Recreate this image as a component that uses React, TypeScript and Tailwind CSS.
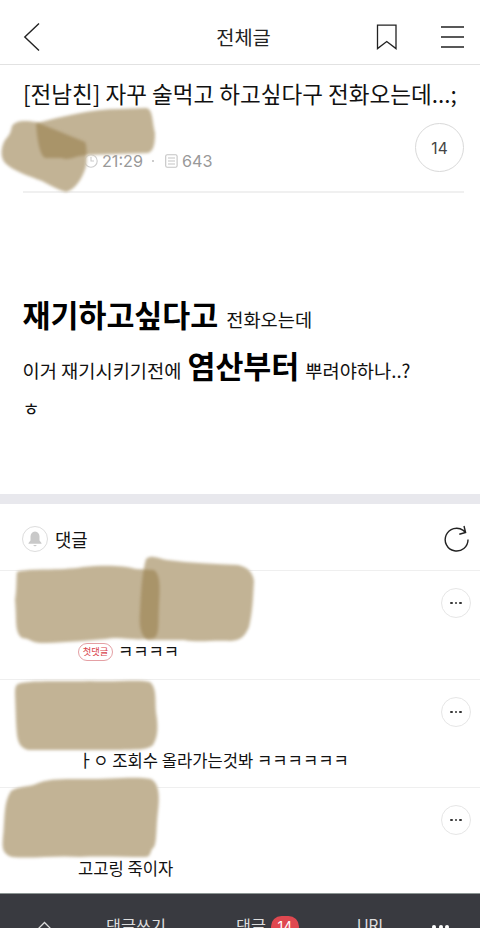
import React from 'react';

const MoreButton = () => (
  <button className="flex h-[30px] w-[30px] items-center justify-center gap-[2px] rounded-full border border-[#e6e6e6]">
    <span className="h-[2.5px] w-[2.5px] rounded-full bg-[#333]" />
    <span className="h-[2.5px] w-[2.5px] rounded-full bg-[#333]" />
    <span className="h-[2.5px] w-[2.5px] rounded-full bg-[#333]" />
  </button>
);

function Comment({ children, height }: { children: React.ReactNode; height: string }) {
  return (
    <li className={`flex flex-col border-t border-[#efefef] ${height}`}>
      <div className="flex h-[61px] justify-end pt-[17px] pr-[9px]">
        <MoreButton />
      </div>
      <div className="flex h-[38px] items-center pl-[78px] text-[16.6px] whitespace-pre text-[#111]">{children}</div>
    </li>
  );
}

const marks = [
  'M37 123 C60 117 92 109 120 109 L146 108 C153 109 152 120 155 133 C155 143 154 151 148 153 L86 155 C75 156 68 161 62 158 L45 158 C39 154 37 136 36 124 Z',
  'M12 126 C17 119 28 121 36 122 L85 142 C87 145 87 159 86 166 C83 178 75 190 66 192 C58 190 50 185 42 181 C29 176 15 172 5 163 C0 157 1 147 5 140 C11 134 11 130 12 126 Z',
  'M17 572 C28 568 60 571 83 567 C102 565 123 565 136 569 L154 570 C161 575 160 590 159 606 C158 622 160 635 154 638 C132 642 122 636 106 639 C82 641 56 643 40 643 C30 642 31 639 22 638 C14 632 17 620 15 600 C17 588 16 578 17 572 Z',
  'M146 559 C152 554 159 559 167 560 C191 563 215 564 238 565 C248 567 253 573 254 581 C253 596 253 610 249 627 C244 638 240 640 231 641 C207 640 200 643 184 640 L148 640 C140 636 139 624 140 612 C141 592 142 573 146 559 Z',
  'M18 684 C28 680 60 682 90 681 C120 682 139 679 150 682 C157 688 155 700 156 712 C159 730 157 738 153 745 C146 751 133 749 120 750 L28 750 C17 747 17 737 16 722 L15 693 C15 687 16 685 18 684 Z',
  'M11 791 C18 786 29 787 36 784 C49 778 67 779 85 779 C111 779 137 776 151 779 C159 783 160 796 158 811 C156 826 157 842 154 847 C149 851 152 857 145 857 C121 857 102 856 80 857 C55 855 33 859 12 857 C2 854 2 847 3 837 C5 820 3 803 11 791 Z',
];

const BrushMarks = () => (
  <svg className="pointer-events-none absolute top-0 left-0" width="480" height="928" viewBox="0 0 480 928">
    <defs>
      <filter id="soft" x="-10%" y="-10%" width="120%" height="120%" colorInterpolationFilters="sRGB">
        <feGaussianBlur stdDeviation="1.4" />
      </filter>
    </defs>
    {marks.map((d) => (
      <path key={'base' + d} d={d} fill="#fff" filter="url(#soft)" />
    ))}
    {marks.map((d) => (
      <path key={d} d={d} fill="rgb(151,126,75)" fillOpacity="0.59" filter="url(#soft)" />
    ))}
  </svg>
);

export default function App() {
  return (
    <div className="relative flex h-[928px] w-[480px] flex-col overflow-hidden bg-white font-['Noto_Sans_CJK_KR',sans-serif] text-[#111]">
      <header className="grid h-[65px] shrink-0 grid-cols-[1fr_auto_1fr] items-center border-b border-[#e2e2e2] pt-[9px] pr-[16px] pl-[23px]">
        <svg width="18" height="28" viewBox="0 0 18 28" fill="none" stroke="#222" strokeWidth="1.4">
          <path d="M16 0.5L1.8 14L16 27.5" />
        </svg>
        <h1 className="text-[19.8px] leading-7 font-normal text-[#222]">전체글</h1>
        <div className="flex items-center justify-end gap-[43px]">
          <svg width="22" height="26" viewBox="0 0 22 26" fill="none" stroke="#222" strokeWidth="1.3">
            <path d="M1.5 1.2H20V24.6L10.75 17.6L1.5 24.6Z" />
          </svg>
          <svg width="23" height="22" viewBox="0 0 23 22" stroke="#222" strokeWidth="1.3">
            <path d="M0 1H23M0 11H23M0 21H23" />
          </svg>
        </div>
      </header>

      <section className="mr-[16px] ml-[23px] flex h-[128px] shrink-0 flex-col border-b-2 border-[#f0f0f0]">
        <h2 className="flex h-[58px] items-center text-[22.55px] font-normal whitespace-nowrap">
          [전남친] 자꾸 술먹고 하고싶다구 전화오는데...;
        </h2>
        <div className="flex justify-between">
          <div className="mt-[28px] flex h-[20px] items-center pl-[61px] font-[Inter,sans-serif] text-[16.2px] text-[#999]">
            <svg width="14" height="14" viewBox="0 0 14 14" fill="none" stroke="#ccc" strokeWidth="1.1">
              <circle cx="7" cy="7" r="6.2" />
              <path d="M7 3V7H10" />
            </svg>
            <span className="ml-[4px]">21:29</span>
            <span className="ml-[9px] h-[2px] w-[2px] rounded-full bg-[#bbb]" />
            <svg className="ml-[11px]" width="13" height="14" viewBox="0 0 13 14" fill="none" stroke="#c4c4c4" strokeWidth="1.1">
              <rect x="0.7" y="0.7" width="11.4" height="12.6" rx="1.5" />
              <path d="M3 4H10M3 7H10M3 10H10" />
            </svg>
            <span className="ml-[4px]">643</span>
          </div>
          <div className="flex h-[49px] w-[49px] items-center justify-center rounded-full border border-[#d9d9d9] pt-[2px] font-[Inter,sans-serif] text-[15.5px] text-[#444]">
            14
          </div>
        </div>
      </section>

      <article className="h-[301px] shrink-0 pt-[96px] pl-[22.5px] text-[18.7px] whitespace-nowrap">
        <p className="flex h-[51px] items-baseline leading-[51px]">
          <b className="text-[30.4px] font-bold text-black">재기하고싶다고</b>
          <span className="ml-[8px]">전화오는데</span>
        </p>
        <p className="flex h-[51px] items-baseline leading-[51px]">
          <span>이거 재기시키기전에</span>
          <b className="ml-[6px] text-[30.4px] font-bold text-black">염산부터</b>
          <span className="ml-[6px]">뿌려야하나..?</span>
        </p>
        <p className="leading-[33px]">ㅎ</p>
      </article>

      <div className="h-[10px] shrink-0 bg-[#e8e8ed]" />

      <section className="flex h-[389px] shrink-0 flex-col">
        <div className="flex h-[66px] items-center justify-between pt-[4px] pr-[10px] pl-[22px]">
          <div className="flex items-center gap-[7px]">
            <span className="flex h-[26px] w-[26px] items-center justify-center rounded-full border border-[#ddd]">
              <svg width="14" height="16" viewBox="0 0 14 16" fill="#c9c9c9">
                <path d="M7 0.5C4 0.8 2.5 3 2.5 5.5V9.5L0.5 12V12.8H13.5V12L11.5 9.5V5.5C11.5 3 10 0.8 7 0.5ZM5 14H9L7 15.5Z" />
              </svg>
            </span>
            <span className="text-[17.8px] leading-6">댓글</span>
          </div>
          <svg width="26" height="28" viewBox="0 0 26 28" fill="none" stroke="#222" strokeWidth="1.4">
            <path d="M24 14.5A11.4 11.4 0 1 1 19.3 5.4L21.4 7.5M20 1L21.6 7.5L15.3 9.2" />
          </svg>
        </div>
        <ul>
          <Comment height="h-[109px]">
            <span className="mt-[2px] mr-[5px] flex h-[18px] w-[35px] items-center justify-center rounded-full border border-[#e4a0a4] text-[9.3px] text-[#d9444c]">
              첫댓글
            </span>
            ㅋㅋㅋㅋ
          </Comment>
          <Comment height="h-[108px]">ㅏㅇ 조회수 올라가는것봐 ㅋㅋㅋㅋㅋㅋ</Comment>
          <Comment height="h-[106px]">고고링 죽이자</Comment>
        </ul>
      </section>

      <footer className="-mb-[46px] flex h-[80px] shrink-0 items-start border-t border-[#8b9492] bg-[#393a40] pl-[36px] text-[16.3px] leading-6 whitespace-nowrap text-[#ddd]">
        <svg className="mt-[27px]" width="17" height="10" viewBox="0 0 17 10" fill="none" stroke="#ddd" strokeWidth="1.3">
          <path d="M1 9L8.5 1.5L16 9" />
        </svg>
        <span className="mt-[19px] ml-[53px]">댓글쓰기</span>
        <span className="mt-[19px] ml-[70px]">댓글</span>
        <span className="mt-[22px] ml-[5px] flex h-[21px] w-[28px] items-center justify-center rounded-full bg-[#df4850] font-[Inter,sans-serif] text-[14px] text-white">
          14
        </span>
        <span className="mt-[20px] ml-[58px] font-[Inter,sans-serif] text-[15.5px]">URL</span>
        <span className="mt-[31px] ml-[45px] flex gap-[2.5px]">
          <i className="h-[4px] w-[4px] rounded-full bg-white" />
          <i className="h-[4px] w-[4px] rounded-full bg-white" />
          <i className="h-[4px] w-[4px] rounded-full bg-white" />
        </span>
      </footer>

      <BrushMarks />
    </div>
  );
}
